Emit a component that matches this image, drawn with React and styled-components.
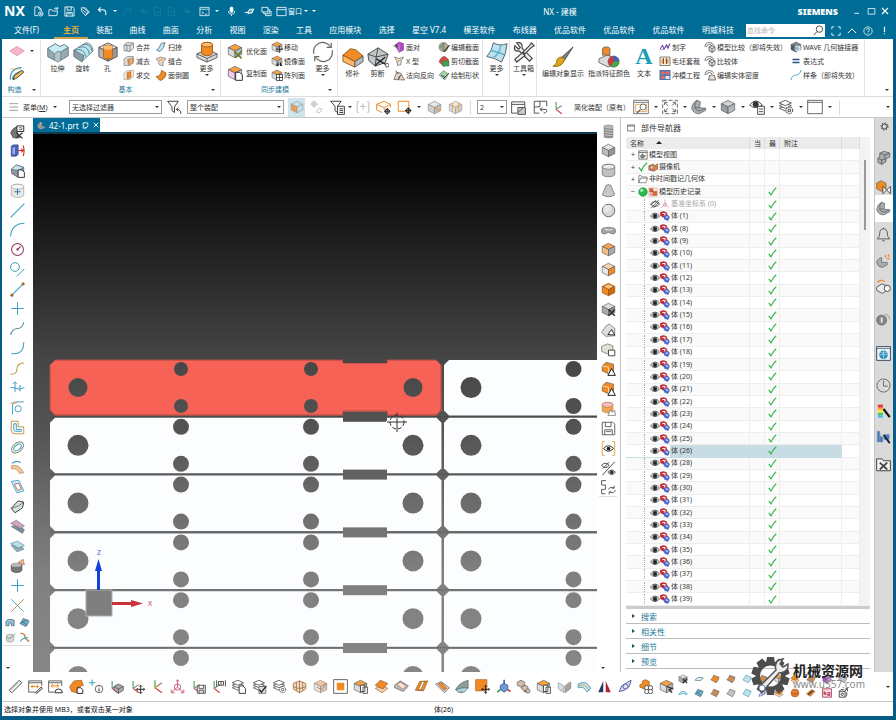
import React from 'react';
import styled, { createGlobalStyle, css } from 'styled-components';

const GlobalStyle = createGlobalStyle`
  * { box-sizing: border-box; }
  html, body, #root { height: 100%; }
  body {
    margin: 0;
    overflow: hidden;
    font-family: "Noto Sans", "Noto Sans CJK SC", sans-serif;
    font-size: 7px;
    color: #333333;
  }
  button, input, select { font: inherit; color: inherit; margin: 0; padding: 0; }
  button { border: 0; background: none; cursor: pointer; }
  svg { display: block; flex: none; }
`;

/* ---------- icon drawings, all on a 24 x 24 grid ---------- */

const OR = '#f08a24';
const GY = '#a9acae';
const LN = '#55585a';
const TL = '#3a9fc0';

const Cube = ({ t = '#d9dbdc', l = '#a9acae', r = '#8b8e90', s = LN }) => (
  <g stroke={s} strokeLinejoin="round">
    <path d="M12 2 22 7 12 12 2 7z" fill={t} />
    <path d="M2 7 12 12V22L2 17z" fill={l} />
    <path d="M22 7 12 12V22L22 17z" fill={r} />
  </g>
);
const OrangeTop = () => <Cube t="#f9a03f" l="#d9dbdc" r="#b9bcbe" />;
const Page = () => <path d="M13 11h6l4 4v8H13z" fill="#fff" stroke="#333" strokeWidth="1.5" />;
const Move = () => <path d="M17 10v13M10.500 16.500h13M15 12l2-2 2 2M15 21l2 2 2-2M12.500 14.500l-2 2 2 2M21.500 14.500l2 2-2 2" stroke="#222" strokeWidth="1.500" fill="none" />;
const Stack = () => (
  <g fill="#fff" stroke={LN} strokeWidth="1.400">
    <path d="M2 14 11 10 20 14 11 18z" />
    <path d="M2 10 11 6 20 10 11 14z" />
    <path d="M2 6 11 2 20 6 11 10z" />
  </g>
);
const Axes = () => (
  <g fill="none" strokeWidth="1.800">
    <path d="M5 3v12" stroke="#4aa564" /><path d="M5 15l9 7" stroke="#d33c3c" /><path d="M5 15 14 9" stroke="#777" />
  </g>
);
const Sheet = ({ c = OR, s = LN }) => <path d="M2 14Q7 9 9 3L22 8Q20 15 15 21z" fill={c} stroke={s} strokeWidth="1.400" />;
const Gear = () => (
  <g stroke={LN} fill="none" strokeWidth="1.600"><circle cx="17" cy="17" r="5" fill="#fff" strokeDasharray="2.500 1" /><circle cx="17" cy="17" r="2" /></g>
);
const Tool = () => <path d="M12 12l10 10M22 12 12 22" stroke="#333" strokeWidth="2.600" />;

const DRAW = {
  none: null,
  newFile: <g stroke="#fff" fill="none" strokeWidth="1.800"><path d="M11 21H4V2h9l5 5v4M13 2v5h5" /><circle cx="17" cy="17" r="5" /><path d="M17 14v6M14 17h6" /></g>,
  open: <g stroke="#fff" fill="none" strokeWidth="1.800"><path d="M2 21V8h6l2 3h11l-2 10zM13 6q4-4 8 0M21 2v5h-5" /></g>,
  save: <g stroke="#fff" fill="none" strokeWidth="1.800"><path d="M2 2h17l3 3v17H2zM7 2v7h9V2M6 22v-8h12v8M8 17h8" /></g>,
  saveGray: <g stroke="#666" fill="none" strokeWidth="1.600"><path d="M2 2h17l3 3v17H2zM7 2v7h9V2M6 22v-8h12v8M8 17h8" /></g>,
  display: <path d="M14 21H4V3h16v9M9 16l5 5 7-8" stroke="#fff" fill="none" strokeWidth="3" />,
  clean: <g stroke="#fff" fill="none" strokeWidth="1.800"><path d="M3 4h9l7 8-7 9-9-10zM8 4l11 11M12 21l9-9M6 8l9 9" /></g>,
  undo: <path d="M8 3 3 8l5 5M3 8h10q8 1 6 12" stroke="#fff" fill="none" strokeWidth="2.200" />,
  redoDim: <path d="M16 3l5 5-5 5M21 8H11q-8 1-6 12" stroke="#1d80a6" fill="none" strokeWidth="1.600" />,
  cutDim: <path d="M3 12h18M12 6v12M6 8l12 8" stroke="#1d80a6" strokeWidth="1.600" />,
  pageDim: <path d="M5 3h9l5 5v13H5zM9 12h6M9 16h6" stroke="#1d80a6" fill="none" strokeWidth="1.600" />,
  windowW: <g stroke="#fff" fill="none" strokeWidth="1.600"><path d="M2 3h20v18H2zM2 7h20M6 12l4 3-4 3M13 18h5" /></g>,
  mic: <g stroke="#fff" fill="none" strokeWidth="1.800"><rect x="9" y="2" width="6" height="12" rx="3" fill="#fff" /><path d="M5 11q0 7 7 7t7-7M12 18v4" /></g>,
  swap: <path d="M2 14h6l5-7h8l-4 8h-6l-3 3M14 11h5" stroke="#fff" fill="none" strokeWidth="2.200" />,
  cascade: <g stroke="#fff" fill="none" strokeWidth="1.800"><path d="M2 3h13v10H2zM6 13v4h12V7h-3M10 17v4h12V11h-4" /></g>,
  frame: <g stroke="#fff" fill="none" strokeWidth="1.800"><path d="M2 3h20v18H2zM2 8h20" /></g>,
  full: <path d="M2 8V2h6M16 2h6v6M22 16v6h-6M8 22H2v-6" stroke="#fff" fill="none" strokeWidth="2" />,
  up: <path d="M2 17 12 7l10 10" stroke="#fff" fill="none" strokeWidth="2.400" />,
  help: <g stroke="#fff" fill="none" strokeWidth="1.800"><circle cx="12" cy="12" r="10" /><path d="M8.500 9q0-3 3.500-3t3.500 3-3.500 4v2M12 17v2" /></g>,
  alert: <path d="M12 2v14M12 19v3" stroke="#fff" strokeWidth="3" />,
  min: <path d="M4 19h14" stroke="#fff" strokeWidth="2.600" />,
  max: <path d="M3 4h18v15H3z" stroke="#fff" strokeWidth="2" fill="none" />,
  close: <path d="M3 3l18 18M21 3 3 21" stroke="#fff" strokeWidth="3.500" />,
  loupe: <g stroke="#333" fill="none" strokeWidth="1.800"><circle cx="14" cy="9" r="7" /><path d="M9 14l-7 8" /></g>,

  plane: <path d="M12 5 23 12 12 19 1 12z" fill="#f7b7c8" stroke="#d98ba0" />,
  sketch: <g fill="none"><path d="M2 22Q1 5 19 4M5 21Q8 10 22 9" stroke={TL} strokeWidth="1.800" /><path d="M2 6h16" stroke="#e5a23c" /><path d="M6 22l2-6L19 8l3 3-11 9z" fill="#f4c25a" stroke="#333" strokeWidth="1.400" /></g>,
  extrude: <g stroke="#6f868e"><path d="M1 8 9 3l5 3 5-2 4 3v9l-11 7L1 17z" fill="#b5c3c8" /><path d="M1 8 9 3l5 3 5-2 4 3-8 5-3-1-4 3z" fill="#c8eef5" /><path d="M1 8l7 6v7L1 17zM15 12l8-5v9l-8 5z" fill="#98a9af" /></g>,
  revolve: <g stroke="#5d7c88"><path d="M2 10 15 2q7 0 8 9L12 21z" fill="#b8e5ef" /><path d="M2 10v7l9 6 2-7z" fill="#8b9ba1" /><path d="M3 10q10-3 12 7M7 7q10-3 12 7M11 4q9-2 11 7" fill="none" /></g>,
  hole: <g><Cube t="#e4e6e7" l="#b4b7b9" r="#989b9d" /><path d="M7 7a5 2.500 0 0 1 10 0v10a5 2.500 0 0 1-10 0z" fill={OR} stroke="#b4601a" /><ellipse cx="12" cy="7" rx="5" ry="2.500" fill="#ffbe72" /></g>,
  unite: <g stroke="#444"><path d="M2 8 9 3l12 1v10l-7 7-12-2z" fill="#dcdfe0" /><path d="M2 8l12 1v12M14 9l7-5M8 8v12" fill="none" /></g>,
  subtract: <g stroke="#555"><path d="M2 8 9 3h12v12l-7 6H2z" fill="#ddd" /><path d="M9 9l10-3v10l-8 4z" fill="#f6b06c" stroke="#b4601a" /><path d="M12 9v8" stroke="#345" /></g>,
  intersect: <g stroke="#888"><path d="M2 8 9 3h12v12l-7 6H2z" fill="#eee" /><path d="M8 7l8-2v12l-8 3z" fill={OR} stroke="#b4601a" /></g>,
  sweep: <path d="M3 18Q9 16 12 5l8-2q-1 12-10 18z" fill="#b8e5ef" stroke="#557" strokeWidth="1.400" />,
  sew: <g><path d="M2 8l9-4 11 3-6 7v8l-8-3q1-8-6-11z" fill="#ead8c6" stroke="#777" strokeWidth="1.400" /><path d="M8 11l8-3" stroke={OR} strokeWidth="2" /></g>,
  blend: <path d="M2 15Q12 15 13 3l9 5q0 12-12 15z" fill={OR} stroke="#8d4b10" strokeWidth="1.400" />,
  moreCyl: <g stroke={LN}><path d="M1 14l11-5 11 5v4l-11 5-11-5z" fill="#d7dadb" /><path d="M1 14l11 5 11-5M12 19v4" fill="none" /><path d="M6 4a6 2.500 0 0 1 12 0v9a6 3 0 0 1-12 0z" fill={OR} stroke="#a85a14" /><ellipse cx="12" cy="4" rx="6" ry="2.500" fill="#ffbe72" stroke="#a85a14" /></g>,
  optFace: <g><OrangeTop /><path d="M11 13l11 10M13 22l9-10" stroke="#6d7a32" strokeWidth="2.600" /></g>,
  copyFace: <g><Cube t="#f9a03f" l="#f4c8f0" r="#c9ccce" /><Page /></g>,
  moveFace: <g><OrangeTop /><Move /></g>,
  mirrorFace: <g><OrangeTop /><path d="M10 22l5-9v9zM23 22l-5-9v9z" fill="#222" /></g>,
  patternFace: <g><OrangeTop /><path d="M11 11h12v12H11zM17 11v12M11 17h12" fill="#fff" stroke="#333" strokeWidth="1.600" /></g>,
  refresh: <g fill="none" stroke="#666" strokeWidth="1.300"><path d="M2 14A10 10 0 0 1 20 6M22 10A10 10 0 0 1 4 18" /><path d="M21 2v5h-5M3 22v-5h5" /></g>,
  patch: <g stroke="#8d5a20"><path d="M1 10 9 3l6 1 8 7-9 6z" fill={OR} /><path d="M1 10l13 7v6L1 17z" fill="#ffb765" /><path d="M14 17l9-6v6l-9 6z" fill="#b9bcbe" stroke={LN} /></g>,
  trim: <g stroke="#444"><path d="M1 9 12 2l11 7-3 9-11 4-7-6z" fill="#c4c7c9" /><path d="M1 9l9 3 2-10M10 12l13-3M10 12l-1 10" fill="none" /><path d="M10 14l12 7M20 12 9 21" stroke="#222" strokeWidth="1.500" /><circle cx="22" cy="21" r="2" fill="#fff" /></g>,
  facePair: <g><path d="M4 8l8-6 9 3v13l-9 5-4-8z" fill="#b04bc0" stroke="#743080" /><path d="M12 7v15" stroke="#ffd7ff" /><path d="M1 10h8M5 7l4 3-4 3" stroke="#333" fill="none" strokeWidth="1.500" /></g>,
  xform: <g stroke="#666" strokeWidth="1.400" fill="#e6e8e9"><path d="M3 4l9 3 9-3-5 8v7l-7 2-1-9z" /><path d="M7 14l9-5" stroke={OR} fill="none" strokeWidth="2" /></g>,
  normal: <g stroke="#555" strokeWidth="1.400"><path d="M2 21l5-14 8 1 8 14z" fill="#e3d8c5" /><path d="M5 3l6 7M17 11l-6 8M11 21l2-7" stroke="#222" fill="none" /></g>,
  editSec: <g><circle cx="11" cy="12" r="9" fill="#bfae98" stroke={LN} /><path d="M3 13l9-9v17" fill="#7faa7c" stroke="#456" /><path d="M12 22 23 8" stroke="#222" strokeWidth="2.200" /></g>,
  cutSec: <g><path d="M2 14q4-12 12-11l7 6v10l-9 4z" fill="#d6493c" stroke="#555" /><path d="M9 12h13v10H9z" fill="#47a04b" stroke="#276" /></g>,
  drawShape: <g><path d="M2 12 11 3l10 7-7 12z" fill="#a6d1a3" stroke="#567" /><path d="M10 20 22 8M6 12l8 5" stroke="#333" strokeWidth="1.700" /></g>,
  surface: <g stroke="#4a5b62"><path d="M1 17Q7 10 8 2q7 4 15 1-1 12-6 20-8-5-16-6z" fill="#bfe1ec" /><path d="M5 10q8 2 15 5M16 4q0 9-8 14" fill="none" stroke="#5fb3cf" strokeWidth="1.600" /></g>,
  toolbox: <g stroke="#444" fill="none" strokeWidth="1.300"><path d="M4 2l4 5-2 2-4-4q-2 7 5 6l11 11 3-3L10 8q1-7-6-6z" fill="#eee" /><path d="M20 2l3 3-3 2-7 7-2-2 7-7zM10 13l-8 7 2 3 9-7z" fill="#eee" /></g>,
  brush: <g><path d="M23 1 11 12l3 3z" fill="#7c8790" stroke="#444" /><path d="M11 12q-6 0-6 6-1 3-4 4 9 2 13-7z" fill="#dfa51b" stroke="#8a6510" /></g>,
  colors: <g stroke="#666"><path d="M1 14l9-4 12 4v4l-11 5-10-5z" fill="#ddd" /><path d="M5 3a4 2 0 0 1 8 0v7H5z" fill={OR} /><circle cx="17" cy="17" r="6" fill="#d33" /><path d="M17 17v-6a6 6 0 0 1 6 6z" fill="#3465c8" stroke="none" /><path d="M17 17h6a6 6 0 0 1-9 5z" fill="#3fae49" stroke="none" /></g>,
  engrave: <g fill="none" strokeWidth="2"><path d="M2 17l5-9 3 9 5-10 3 8 4-10" stroke="#573c9e" /><path d="M5 18 20 8" stroke="#a75ac8" /></g>,
  nest: <g><path d="M2 4h20v17H2z" fill="#f4efe4" stroke="#665" strokeWidth="1.600" /><path d="M5 8h5v9H5zM13 8h6v9h-6z" fill="#e4a04a" /><path d="M9 6v12M15 6v12" stroke="#733" strokeWidth="1.500" /></g>,
  die: <g><path d="M1 2h22v20H1z" fill="#4d77b8" /><path d="M4 5h7v6H4zM13 5h8v6h-8zM4 14h7v6H4z" fill="#e36a5c" /><path d="M13 14h8v6h-8z" fill="#dfe8f3" /></g>,
  compare: <g fill="none" stroke="#555" strokeWidth="1.600"><path d="M2 12Q2 3 11 3q6 0 9 6M5 12q1-5 6-5 3 0 5 3" /><path d="M10 12l6-3 6 3v7l-6 4-6-4zM10 12l6 3 6-3M16 15v8" fill="#ddd" /></g>,
  density: <g fill="none" stroke="#555" strokeWidth="1.600"><path d="M2 12Q2 3 11 3q6 0 9 6M5 12q1-5 6-5 3 0 5 3" /><path d="M11 13h3q2-5 4 0h3l2 9H9z" fill="#ddd" /></g>,
  wave: <g><Cube t="#7b858c" l="#4f5a62" r="#9ec2d1" /><circle cx="15" cy="15" r="5" fill="none" stroke="#fff" strokeWidth="1.800" /></g>,
  equals: <path d="M5 9h14M5 15h14" stroke="#2e4f86" strokeWidth="2.600" />,
  spline: <path d="M2 22Q4 12 12 12T22 2" stroke={TL} fill="none" strokeWidth="1.700" />,

  menu: <path d="M1 4h21M1 12h21M1 20h21" stroke="#777" strokeWidth="1.700" />,
  funnel: <g stroke="#444" fill="none" strokeWidth="1.600"><path d="M1 2h17l-6 9v9l-4-3v-6zM22 22q1-7-7-7M18 12l-3 3 3 3" /></g>,
  faceCube: <g><Cube t="#c9dfe5" l="#f39a4c" r="#c9dfe5" s="#8a9a9f" /></g>,
  link: <g stroke="#bbb" fill="none" strokeWidth="1.600"><path d="M7 1v12M1 7h12" /><rect x="3" y="3" width="8" height="8" rx="4" /><path d="M12 18l4-4q5 0 4 4l-4 4q-5 1-4-4" /></g>,
  funnelList: <g stroke="#444" fill="#fff" strokeWidth="1.600"><path d="M1 2h17l-6 8v10l-4-3v-7z" /><path d="M12 10h11v13H12zM15 14h6M15 17h6M15 20h6" /></g>,
  boxDim: <g stroke="#bbb" fill="none" strokeWidth="1.600"><path d="M5 3H2v18h3M19 3h3v18h-3M12 6v11M7 11h10" /></g>,
  boxSel: <g stroke={OR} fill="none" strokeWidth="1.600"><path d="M1 7 13 2l10 5-10 5zM1 7v9l9 4M23 7v5M13 12v4" /><path d="M18 13v10M13 18h10" stroke="#222" /><circle cx="18" cy="18" r="3.500" stroke="#222" /></g>,
  rectSel: <g fill="none" strokeWidth="1.600"><path d="M2 2h17v16H2z" stroke={OR} /><path d="M18 12v11M13 17h10" stroke="#222" /><circle cx="18" cy="17" r="3.500" stroke="#222" /></g>,
  cubeIn: <g><Cube t="#e6e6e6" l="#d0d0d0" r="#c0c0c0" s="#888" /><path d="M12 12l10 5" stroke={OR} strokeWidth="1.500" /></g>,
  cubeWire: <g><Cube t="#f4e3d3" l="#ddd" r="#d6d0c8" s="#999" /><path d="M7 5v14M17 5v14" stroke={OR} /></g>,
  winList: <g stroke="#555" fill="none" strokeWidth="1.600"><path d="M1 3h21v8M1 3v18h9M1 7h21" /><path d="M11 12h12v11H11zM11 20l9-8" fill="#ccc" /></g>,
  frames: <g stroke="#555" fill="none" strokeWidth="1.600"><path d="M2 2h20v8M2 2v19h8M2 11h9V2M12 15h9q3 5-4 6M15 12l-4 3 4 3" /></g>,
  axes: <Axes />,
  loupeWin: <g stroke="#666" fill="none" strokeWidth="1.300"><path d="M1 2h22v20H1z" fill="#fff" /><path d="M1 5h22" /><path d="M4 8h16v11H4z" stroke="#e5a23c" /><circle cx="15" cy="12" r="4.500" fill="#fff" /><path d="M11 16l-5 5" strokeWidth="2.200" /></g>,
  fit: <g stroke="#555" fill="none" strokeWidth="1.300"><path d="M1 2h22v20H1z" strokeDasharray="6 3" /><path d="M4 5l5 5M20 5l-5 5M4 19l5-5M20 19l-5-5M4 9V5h4M20 9V5h-4M4 15v4h4M20 15v4h-4" /></g>,
  bracket: <g stroke={LN}><path d="M1 14Q2 5 9 2l5 2-1 9 9 1v3l-9 5q-9 1-12-8z" fill={GY} /><path d="M22 14l-9 4q-5 0-7-5M9 2q-4 5-3 11 4-1 7 0" fill="none" /></g>,
  cubeShade: <Cube t="#cfd1d2" l="#9b9e9f" r="#b5b8b9" />,
  eyeList: <g stroke="#333" fill="none" strokeWidth="1.300"><path d="M1 9q9-12 19 0-10 8-19 0z" fill="#fff" /><circle cx="10" cy="8" r="4" fill="#333" /><path d="M13 11h10v12H13zM15 15h6M15 19h6" fill="#fff" /></g>,
  layers: <g><Stack /><Gear /></g>,
  blankWin: <path d="M1 2h22v20H1zM1 5h22" fill="#fff" stroke="#555" strokeWidth="1.300" />,

  partEdit: <g><path d="M1 14q3-8 11-10v10l4 8H5z" fill="#777" stroke="#333" /><path d="M11 3h11v9H11z" fill="#fff" stroke="#333" strokeWidth="1.600" /><path d="M14 6h5v3h-5" stroke="#333" fill="none" /><path d="M10 14l10 9M20 14 9 23" stroke="#333" strokeWidth="2" /></g>,
  moveObj: <g><path d="M2 5l3-2h8v15l-3 3H2z" fill="#4a63c9" stroke="#334" /><path d="M4 7h4v11H4z" fill="#9aabee" /><path d="M12 12h9M18 9l3 3-3 3M21 4q3 8 0 17" stroke="#c33" fill="none" strokeWidth="1.800" /></g>,
  copyBody: <g><path d="M2 10 10 3l12 4v12l-9 4-10-6z" fill="#8d9aa0" stroke="#444" /><path d="M2 10 10 3l12 4-9 5z" fill="#c3e3ee" stroke="#567" /><Page /></g>,
  cylCut: <g stroke="#999"><path d="M2 6a10 4 0 0 1 20 0v13a10 4 0 0 1-20 0z" fill="#e8e8e8" /><ellipse cx="12" cy="6" rx="10" ry="4" fill="#f6f6f6" /><path d="M12 9v10M7 14h10" stroke="#3c78a0" strokeWidth="1.600" /></g>,
  line: <path d="M1 23 23 1" stroke={TL} strokeWidth="1.700" />,
  arc: <path d="M1 23Q2 3 23 2" stroke={TL} strokeWidth="1.700" fill="none" />,
  circle: <g fill="none" stroke="#8c3a66" strokeWidth="1.700"><circle cx="12" cy="12" r="9.500" /><path d="M12 12l5-5" /><circle cx="12" cy="12" r="1" fill="#8c3a66" /></g>,
  tangent: <g fill="none" stroke={TL} strokeWidth="1.600"><circle cx="8" cy="8" r="7" /><path d="M11 23 23 11" /></g>,
  segment: <g><path d="M3 21 21 3" stroke={TL} strokeWidth="1.700" /><circle cx="3" cy="21" r="2.500" fill="#a86c2c" /><circle cx="21" cy="3" r="2.500" fill="#a86c2c" /></g>,
  plus: <path d="M12 2v20M2 12h20" stroke={TL} strokeWidth="1.600" />,
  scurve: <path d="M1 22Q4 12 12 12T22 2" stroke="#4f88a0" strokeWidth="1.700" fill="none" />,
  corner: <path d="M2 20Q22 23 22 2" stroke={TL} strokeWidth="1.700" fill="none" />,
  scurveOr: <path d="M1 21q10 1 10-8T22 3" stroke="#c29a55" strokeWidth="1.700" fill="none" />,
  trimCurve: <g stroke={TL} strokeWidth="1.600" fill="none"><path d="M1 12q7 0 10 2t12-2M8 4v15M16 8v10M5 6l3-3 3 3" /></g>,
  offsetCirc: <g fill="none" stroke={TL} strokeWidth="1.500"><circle cx="13" cy="14" r="5" /><path d="M4 23V8q0-5 5-5h13" /><path d="M1 5h10" stroke={OR} /></g>,
  offsetBox: <g fill="none" strokeWidth="1.600"><path d="M2 2h11v9h9v11H8q-6 0-6-6z" stroke="#c89750" /><path d="M6 6h4v9h8v3H9q-3 0-3-3z" stroke={TL} /></g>,
  ring: <g fill="none" strokeWidth="1.500"><ellipse cx="12" cy="12" rx="11" ry="7" transform="rotate(-40 12 12)" stroke="#7a8a70" /><ellipse cx="12" cy="12" rx="7" ry="4" transform="rotate(-40 12 12)" stroke={TL} /></g>,
  sheetOr: <g><path d="M2 11Q14 7 22 22l-7 1Q12 14 3 16z" fill="#f2c7a2" stroke="#c77a3a" /><path d="M3 7q8-6 14-1" stroke={TL} fill="none" strokeWidth="1.800" /></g>,
  sheetTl: <g stroke={TL} fill="#d8eef5" strokeWidth="1.400"><path d="M2 4l12-2 8 17-11 3z" /><path d="M7 8l7-1 4 9-6 2z" fill="#fff" stroke="#a66" /></g>,
  sheetDk: <g><path d="M2 15 13 3l9 2-2 9-12 8z" fill="#d7e4e6" stroke="#333" strokeWidth="1.500" /><path d="M2 15q12-2 20-10" stroke="#333" fill="none" /></g>,
  sheetPk: <g stroke="#678"><path d="M2 12 12 9l11 8-3 6z" fill="#7d8c93" /><path d="M1 7l9-5 13 9-6 4z" fill="#d6a3bc" /></g>,
  sheetBl: <g stroke="#49808f"><path d="M2 12l9 10 11-4-5-8z" fill="#9ab" /><path d="M1 9l11-4 11 7-10 4z" fill="#b9dfe7" /></g>,
  cylArr: <g><path d="M2 11a9 4 0 0 1 17 0v8a8 4 0 0 1-17 0z" fill="#777" stroke="#333" /><ellipse cx="10" cy="11" rx="8" ry="3" fill="#bbb" /><path d="M13 7l8-5 2 9z" fill="#f0b989" stroke="#a65" /></g>,
  crossX: <g strokeWidth="1.500"><path d="M2 2l20 20" stroke={TL} /><path d="M22 2 2 22" stroke="#c57f45" /></g>,
  arch: <path d="M2 19V10q4-8 18-3v12h-6v-6h-5v6z" fill="#8fc4d6" stroke="#456" strokeWidth="1.400" />,
  sheetB2: <g><Sheet c="#5fb3cf" /><path d="M6 9l12 9M4 14l12-8" stroke="#345" /></g>,
  cylClip: <g stroke="#678"><path d="M3 8a8 3 0 0 1 16 0v10a8 4 0 0 1-16 0z" fill="#dcd7c8" /><path d="M3 11q8 8 19-8" fill="none" stroke={TL} strokeWidth="1.800" /></g>,
  twist: <g><path d="M3 3q12 0 10 10l9 8" stroke="#c98446" strokeWidth="3" fill="none" /><path d="M3 21q3-8 17-9" stroke={TL} strokeWidth="2.400" fill="none" /></g>,

  thread: <g stroke="#777"><path d="M5 3q7-3 14 0v18q-7 3-14 0z" fill="#bbb" /><path d="M5 7l14 2M5 11l14 2M5 15l14 2M5 19l14 2" fill="none" strokeWidth="1.400" /></g>,
  cube: <Cube t="#e2e4e5" l="#b9bcbe" r="#95989a" />,
  cyl: <g stroke={LN}><path d="M2 6a10 4 0 0 1 20 0v12a10 4 0 0 1-20 0z" fill="#bfc2c4" /><ellipse cx="12" cy="6" rx="10" ry="4" fill="#e8eaeb" /></g>,
  cone: <path d="M2 19 8 4q4-3 8 0l6 15q-10 6-20 0z" fill="#c6c9cb" stroke={LN} />,
  sphere: <g><circle cx="12" cy="12" r="10" fill="#d4d6d7" stroke={LN} strokeWidth="1.400" /><circle cx="10" cy="9" r="6" fill="#e4e6e7" /></g>,
  tube: <g stroke={LN}><path d="M1 11q0-4 11-4t11 4v4q-2 4-6 2-5-4-10 0-4 2-6-2z" fill="#a3a6a8" /><path d="M6 10q6 3 12 0" fill="none" stroke="#eee" strokeWidth="1.500" /></g>,
  edgeOr: <g><Cube t="#f5a14f" l="#f8bd82" r="#a9acae" /></g>,
  chamOr: <g><Cube t="#f4d3b0" l="#e4e6e7" r={OR} /></g>,
  shell: <g><Cube t="#e07c18" l="#f08a24" r="#c96a10" s="#8d4b10" /><path d="M5 7l7 4 7-4-7-3z" fill="#fac489" /></g>,
  cubeTool: <g><Cube /><Tool /></g>,
  wedge: <g stroke={LN}><path d="M1 17Q6 6 13 3l9 7v12L8 23z" fill="#dcdedf" /><path d="M11 20l6-8 5 9z" fill="#fff" stroke="#222" strokeWidth="1.500" /></g>,
  cubePair: <g><path d="M1 7l9-4 9 3v8l-9 5-9-4z" fill="#e1e0d2" stroke={LN} /><path d="M12 13h10v9H12z" fill="#fff" stroke="#444" strokeWidth="1.500" /></g>,
  orTri: <g><path d="M2 8 8 2l12 3v12l-9 3-9-4z" fill={OR} stroke="#555" /><path d="M2 8l10 2v10" fill="none" stroke="#fff" /><path d="M11 23l6-11 6 11z" fill="#fff" stroke="#222" strokeWidth="1.600" /></g>,
  cylPk: <g stroke="#b0783a"><path d="M2 5a9 4 0 0 1 17 0v11a9 4 0 0 1-17 0z" fill="#f2a65a" /><ellipse cx="10.500" cy="6" rx="8.500" ry="4" fill="#f6bccb" /><path d="M11 23l4-9 3 4 4-3 1 8z" fill="#fff" stroke="#555" /></g>,
  eyeBox: <g fill="none" strokeWidth="1.600"><path d="M6 1H2v22h4M18 1h4v22h-4" stroke="#e4a45a" /><path d="M4 12q8-9 16 0-8 9-16 0z" stroke="#333" /><circle cx="12" cy="12" r="3" fill="#222" /></g>,
  eyeSwap: <g stroke="#444" fill="none" strokeWidth="1.500"><path d="M1 7q6-7 12 0-6 7-12 0zM22 1 2 23M3 12 13 2M11 18q6-7 12 0-6 7-12 0z" /><circle cx="17" cy="18" r="2.500" fill="#222" /></g>,
  sync: <g stroke="#555" fill="none" strokeWidth="1.500"><path d="M8 1H1v7h6v7H1v7h6M12 15q2-5 9-2M23 16q-2 7-9 3M21 9v4h-4M13 23v-4h4" /></g>,

  ruler: <g><path d="M2 18 18 2l4 4L6 22z" fill="#fff" stroke="#444" strokeWidth="1.600" /><path d="M5 18 18 5" stroke="#999" /></g>,
  dimA: <g fill="none" strokeWidth="1.600"><path d="M22 11V3H1v18h11" stroke="#666" /><path d="M1 6h21" stroke="#666" /><path d="M5 12h12M8 9l-3 3 3 3M14 9l3 3-3 3" stroke={OR} /><path d="M12 22l9-9 2 2-9 8z" fill="#fff" stroke="#333" /></g>,
  dimB: <g fill="none" strokeWidth="1.600"><path d="M22 11V3H1v18h9M1 6h21" stroke="#666" /><path d="M5 11h12M8 8l-3 3 3 3M14 8l3 3-3 3" stroke={OR} /><path d="M11 22a6 6 0 0 1 12 0z" fill="#fff" stroke="#333" /></g>,
  orShape: <g><path d="M1 12 8 3l12-1 3 8-8 3-2 9-9-2z" fill={OR} stroke="#935312" /><path d="M13 23v-9h6l3 3v6z" fill="#fff" stroke="#222" strokeWidth="1.500" /></g>,
  info: <g fill="none"><path d="M5 1v10M0 6h10" stroke={TL} strokeWidth="1.600" /><circle cx="16" cy="16" r="6" stroke="#555" strokeWidth="1.400" /><path d="M16 15v5M16 12v1" stroke="#333" strokeWidth="1.600" /></g>,
  axesCube: <g><Axes /><path d="M8 12l7-4 8 4v6l-8 5-7-5z" fill="#aaa" stroke="#444" /><path d="M8 12l7 4 8-4M15 16v7" fill="none" stroke="#444" /></g>,
  axesMove: <g><Axes /><Move /></g>,
  axesSimple: <g fill="none" strokeWidth="2"><path d="M8 2v12" stroke="#4aa564" /><path d="M8 14l11 8" stroke="#d33c3c" /><path d="M8 14 19 6" stroke="#a0824a" /><circle cx="8" cy="14" r="2" fill="#e0b030" /></g>,
  axesTri: <g fill="none" stroke="#c65c74" strokeWidth="1.500"><path d="M12 2v11L3 21M12 13l9 8" /><circle cx="12" cy="13" r="5" /><path d="M10 4l2-3 2 3M2 17v5h5M22 17v5h-5" /></g>,
  axesSave: <g><Axes /><path d="M10 10h13v13H10zM13 10v5h7v-5M13 23v-5h7v5" fill="#ddd" stroke="#555" strokeWidth="1.400" /></g>,
  axesTag: <g><Axes /><path d="M9 2v10M23 2v10M12 4h8v6h-8zM16 4v6" fill="none" stroke="#555" strokeWidth="1.600" /></g>,
  stackPage: <g><Stack /><Page /></g>,
  stackCheck: <g><Stack /><path d="M11 12h11v11H11z" fill="#ddd" stroke="#444" /><path d="M12 17l3 4 8-10" fill="none" stroke="#222" strokeWidth="2" /></g>,
  stackGear: <g><Stack /><Gear /></g>,
  globeOr: <g stroke="#a57445" fill="#f1dcc5" strokeWidth="1.400"><path d="M2 7l10-4 10 4v9l-10 6-10-6z" /><path d="M2 12q10 6 20 0M12 3v19M7 5v14M17 5v14" fill="none" /></g>,
  boxOr: <g><Cube t="#f3c7a0" l="#e5e7e8" r="#d1cdbf" s="#888" /><path d="M6 13l8 4 7-9" fill="none" stroke="#c77a3a" strokeWidth="1.500" /></g>,
  square: <g><path d="M1 1h22v22H1z" fill="#fff" stroke="#555" strokeWidth="1.400" /><path d="M6 6h12v12H6z" fill={OR} /></g>,
  orPage: <g><OrangeTop /><path d="M12 10h7v10h-7zM16 13h7v10h-7z" fill="#fff" stroke="#444" strokeWidth="1.400" /></g>,
  orStack: <g stroke="#83501c"><path d="M2 15l10-5 10 5-9 7z" fill="#f2d2b4" /><path d="M2 10l8-8 12 5-8 9z" fill={OR} /></g>,
  slabA: <g stroke="#555"><path d="M1 10l9-7 13 8-8 9-14-6z" fill="#bbb" /><path d="M5 9l5-4 9 6-5 5z" fill="#fbe8d8" stroke="#a65" /></g>,
  slabB: <g stroke="#83501c"><path d="M2 18 9 4l13-1-7 16z" fill={OR} /><path d="M7 17l6-13 4 0-6 13z" fill="#fff" /></g>,
  slabC: <g stroke="#555"><path d="M1 8l9-4 13 10-8 8z" fill="#cfd2d3" /><path d="M5 8l6-2 8 9-5 3z" fill={OR} stroke="#a65" /></g>,
  wing: <g stroke="#555"><path d="M1 17Q6 6 21 2v12l-11 8z" fill="#8fa09b" /><path d="M1 17q10-4 20-3l-6 7H5z" fill="#a5d8e2" /></g>,
  orMove: <g><path d="M1 1h18v18H1z" fill={OR} stroke="#a85a14" /><Move /></g>,
  cubeAxis: <g><path d="M7 10l6-3 6 3v7l-6 4-6-4z" fill="#6d9bd8" stroke="#336" /><path d="M13 1v7" stroke="#2a52b8" strokeWidth="2.400" /><path d="M7 17l-5 4" stroke="#2f9b44" strokeWidth="2.600" /><path d="M19 17l4 3" stroke="#c33" strokeWidth="2.600" /></g>,
  chain: <g stroke="#777" fill="#d8b9a3" strokeWidth="1.400"><path d="M2 5l6-3 6 3v5l-6 3-6-3zM9 12l5-2 5 2v4l-5 3-5-3z" /><circle cx="19" cy="19" r="3.500" /><path d="M12 19l5 2" fill="none" strokeWidth="2" /></g>,
  mirrorSh: <g><path d="M2 6l9 5v11l-9-7z" fill="#cfe3ea" stroke="#888" /><path d="M13 11l9-6v10l-9 7z" fill="#a3a6a8" stroke="#777" /><path d="M5 20 20 4" stroke="#d79a5c" /></g>,
  archSh: <g fill="none" strokeWidth="1.500"><path d="M2 8Q15 1 22 15l-6 6Q12 11 2 14z" fill="#cfe6ec" stroke={TL} /><path d="M2 11q12-5 17 7" stroke="#d79a5c" /></g>,
  mirror: <g><path d="M10 3v18H2z" fill="#2c3566" /><path d="M14 3v18h8z" fill="#a8262c" /></g>,
  linkBl: <g fill="#dce0f5" stroke="#5b62a6" strokeWidth="1.600"><path d="M2 20l4-9 8-5 7-4-3 10-8 6z" /><circle cx="12" cy="12" r="4" /></g>,
  orDots: <g><path d="M3 9l4-2V3l5-2 6 3v7l-8 5-7-3z" fill={OR} stroke="#935312" /><g fill="#fff" stroke="#444" strokeWidth="1.400"><circle cx="14" cy="14" r="3.500" /><circle cx="20" cy="14" r="3.500" /><circle cx="14" cy="20" r="3.500" /><circle cx="20" cy="20" r="3.500" /></g></g>,
  orCubeArr: <g><OrangeTop /><path d="M12 12l9 3-5 2 5 5" fill="none" stroke="#333" strokeWidth="2" /></g>,
  kg: <g><path d="M1 2h22v20H1z" fill="#f8dbe4" stroke="#a5304e" strokeWidth="2" /><text x="12" y="17" fontSize="14" fontWeight="700" textAnchor="middle" fill="#b3224a">kg</text></g>,
  boxArrow: <g fill="none" stroke="#333" strokeWidth="2"><path d="M3 8h14v14H3zM3 8l4-4h8M17 22l4-4v-8M23 1l-8 8M17 2h6v6" /><circle cx="10" cy="15" r="3" /></g>,
  shOr: <Sheet />,
  shTan: <Sheet c="#c98b52" />,
  shGray: <Sheet c="#c2c5c7" />,
  shBlue: <Sheet c="#bfe3ef" s="#3a87a0" />,
  shPurple: <g><Cube t="#c58be0" l="#9f58c6" r="#b79ae0" s="#635" /></g>,
  flat: <path d="M2 15 9 8l13 1-6 7z" fill="#d8eef0" stroke="#4e7f86" strokeWidth="1.700" />,
  curveBl: <path d="M2 16q4-10 12-8 7 2 8 8-10-6-20 0z" fill="#d8eef5" stroke={TL} strokeWidth="1.700" />,
  ballOr: <g><circle cx="12" cy="12" r="9.500" fill="#e8792a" stroke="#7d4310" /><path d="M3 13q9 5 18-1" stroke="#7d4310" fill="none" /></g>,
  barOr: <g stroke="#6b3f12"><path d="M1 14 13 4l9 4-11 12z" fill={OR} /><path d="M5 16 17 6" strokeWidth="3" stroke="#333" /></g>,

  gear: <g fill="none" stroke="#333"><circle cx="12" cy="12" r="7" strokeWidth="2.600" /><circle cx="12" cy="12" r="9.500" strokeWidth="2.600" strokeDasharray="3 4.460" /></g>,
  assembly: <g stroke="#444"><path d="M6 5l7-3 9 3v6l-6 3v5l-7 4-6-3v-7l3-2z" fill="#aaadaf" /><path d="M6 5l8 3 8-3M14 8v6M3 13l6 3 7-2M9 16v7" fill="none" /></g>,
  constraint: <g><path d="M1 5l7-4 8 4v9l-8 4-7-4z" fill={OR} stroke="#555" /><path d="M11 10v12l12-12v12z" fill="#fff" stroke="#444" strokeWidth="1.500" /></g>,
  bell: <g fill="none" stroke="#555" strokeWidth="1.500"><path d="M2 19q4-3 4-9 0-7 6-7t6 7q0 6 4 9zM10 22h4M12 1v2" /></g>,
  bracketDots: <g><path d="M1 14q3-6 8-7v8h9v4l-8 4q-8-1-9-9z" fill={GY} stroke={LN} /><path d="M15 3v4M20 2v4M17 9h5" stroke={OR} strokeWidth="2.200" /></g>,
  reuse: <g><path d="M1 13l8-5 9 3v7l-8 5-9-5z" fill="#eee" stroke="#555" strokeWidth="1.500" /><circle cx="18" cy="15" r="5" fill="#fff" stroke="#444" strokeWidth="1.500" /><path d="M2 5l6-3 6 2" fill="none" stroke={OR} strokeWidth="2" /></g>,
  infoG: <g><circle cx="9" cy="13" r="8" fill="#888" stroke="#555" /><path d="M9 9v8" stroke="#fff" strokeWidth="2.400" /><path d="M14 3q7 2 8 9" stroke="#aaa" fill="none" strokeWidth="2" /></g>,
  web: <g><path d="M1 1h22v22H1z" fill="#e8f2f7" stroke="#345" strokeWidth="1.500" /><path d="M1 4h22" stroke="#345" /><circle cx="12" cy="14" r="7" fill="#2f8fb8" /><path d="M5 14h14M12 7v14M7 10q5 3 10 0" stroke="#cde9f3" fill="none" /></g>,
  clock: <g fill="none" stroke="#666" strokeWidth="1.500"><circle cx="12" cy="12" r="10.500" /><path d="M12 4v9h7" /></g>,
  roles: <g><path d="M3 1h8v5H3z" fill="#e33" /><path d="M3 6h8v4H3z" fill="#fa3" /><path d="M3 10h8v4H3z" fill="#fe4" /><path d="M3 14h8v4H3z" fill="#4c5" /><path d="M3 18h8v4H3z" fill="#4be" /><path d="M12 8l10 13" stroke="#111" strokeWidth="3.500" /></g>,
  process: <g><path d="M2 2h4v17H2zM6 9l5 3v7H6zM13 7h8v8h-8z" fill="#4f79b5" stroke="#6e8fc0" /><path d="M12 8l10 13" stroke="#17233a" strokeWidth="3" /></g>,
  toolsBox: <g><path d="M1 3h9l2 3h11v16H1z" fill="#f4f4f4" stroke="#444" strokeWidth="1.600" /><path d="M6 9l12 11M18 9 6 20" stroke="#444" strokeWidth="2.800" /></g>,

  check: <path d="M2 13l6 8Q13 9 22 2" fill="none" stroke="#35b54a" strokeWidth="3.200" />,
  eye: <g fill="none" stroke="#444" strokeWidth="2"><path d="M1 12q11-14 22 0-11 12-22 0z" fill="#fff" /><circle cx="12" cy="12" r="5" fill="#222" /></g>,
  eyeOff: <g fill="none" stroke="#444" strokeWidth="2"><path d="M1 12q11-12 22 0-11 12-22 0zM3 22 21 2M9 21 22 7M2 15 14 3" /></g>,
  body: <g><path d="M1 3l8-2 7 3v6l-8 5-7-4z" fill="#d22c36" stroke="#801" /><path d="M6 6h6v6" stroke="#fff" fill="none" strokeWidth="2.400" /><path d="M9 13l9-4 5 6-4 8-8-3z" fill="#4d6be0" stroke="#237" /><path d="M14 13l5 3" stroke="#cfe0ff" strokeWidth="3" /></g>,
  viewBox: <g stroke="#555" fill="#fff" strokeWidth="1.800"><path d="M2 2h20v20H2zM2 6h20" /><path d="M6 14l6-5v5h6l-5 5H8z" fill="#999" stroke="#444" /></g>,
  camera: <g><path d="M2 9 13 5l4 4 6-5v13l-9 5-12-3z" fill="#d3814a" stroke="#744" strokeWidth="1.400" /><circle cx="9" cy="13" r="4" fill="#e9cdb9" stroke="#555" /></g>,
  folder: <g fill="#fff" stroke="#555" strokeWidth="1.600"><path d="M2 21V4h6l2 3h11v3M2 21 6 10h17l-4 11z" /></g>,
  ball: <g><circle cx="12" cy="12" r="10.500" fill="#2fb84a" stroke="#1d7d31" /><circle cx="9" cy="8" r="4" fill="#a9efb2" /></g>,
  history: <g><path d="M2 2h20v20H2z" fill="#f7e2d3" stroke="#c89" /><path d="M4 4h8v8H4zM12 11h9v9h-9z" fill="#e0682c" stroke="#833" /><path d="M7 14v5h4" fill="none" stroke="#c33" strokeWidth="1.600" /></g>,
  csys: <g fill="none" stroke="#d98a9e" strokeWidth="1.700"><path d="M12 1v12l-9 8M12 13l9 8" /><circle cx="12" cy="14" r="4" /></g>,
  win: <g fill="none" stroke="#444" strokeWidth="2"><path d="M2 3h20v18H2zM2 6h20" /></g>,
};

const Glyph = ({ name, size = 16 }) => (
  <svg width={size} height={size} viewBox="0 0 24 24" aria-hidden="true">{DRAW[name]}</svg>
);

const Caret = styled.span`
  flex: none;
  width: ${p => p.$w || 8}px;
  display: flex;
  justify-content: center;
  &::before {
    content: "";
    border: 2px solid transparent;
    border-top-color: ${p => p.$light ? '#ffffff' : '#333333'};
    border-bottom-width: 0;
  }
`;

const IconButton = styled.button`
  flex: none;
  display: flex;
  align-items: center;
  justify-content: center;
  width: ${p => p.$w || 16}px;
  height: ${p => p.$h || 16}px;
  ${p => p.$on && css`
    background: #cfe5ec;
    margin-left: 4px;
  `}
`;

const Tool1 = ({ name, w, h, size, on }) => (
  <IconButton type="button" aria-label={name} $w={w} $h={h} $on={on}>
    <Glyph name={name} size={size} />
  </IconButton>
);

/* ---------- window frame ---------- */

const Frame = styled.div`
  height: 100vh;
  display: grid;
  grid-template-rows: 39px 58px 21px minmax(0, 1fr) 30px 14px;
  padding: 0 3px 4px 2px;
  background: #075c86;
`;

const Header = styled.header`
  margin: 0 -3px 0 -2px;
  background: #006d97;
  color: #ffffff;
  display: grid;
  grid-template-rows: 22px 17px;
`;

const TitleBar = styled.div`
  display: grid;
  grid-template-columns: 1fr auto 1fr;
  align-items: center;
`;

const QuickBar = styled.div`
  display: flex;
  align-items: center;
  padding-left: 4px;
`;

const Logo = styled.strong`
  width: 26px;
  font-size: 14px;
  line-height: 22px;
`;

const WindowTitle = styled.div`
  font-size: 8px;
  padding-left: 224px;
`;

const WindowControls = styled.div`
  display: flex;
  align-items: center;
  justify-content: flex-end;
  padding-right: 4px;
`;

const Brand = styled.strong`
  font-size: 9px;
  font-weight: 900;
  margin-right: 11px;
`;

const MenuBar = styled.nav`
  display: flex;
  align-items: center;
  padding: 0 4px 0 14px;
`;

const MenuTabs = styled.div`
  flex: 1;
  display: flex;
  justify-content: space-between;
  margin: 0 12px 0 24px;
`;

const MenuTab = styled.button`
  font-size: 8px;
  line-height: 15px;
  height: 17px;
  white-space: nowrap;
  border-bottom: 2px solid transparent;
  ${p => p.$active && css`
    color: #f0b040;
    margin: 0 -9px;
    padding: 0 9px;
    border-color: #c9a14c;
    font-weight: 700;
  `}
`;

const SearchBox = styled.label`
  display: flex;
  align-items: center;
  width: 79px;
  height: 13px;
  margin-right: 3px;
  padding: 0 1px;
  background: #ffffff;
`;

const SearchInput = styled.input`
  flex: 1;
  min-width: 0;
  border: 0;
  outline: 0;
  background: none;
  color: #333333;
  &::placeholder { color: #b5b5b5; }
`;

/* ---------- ribbon ---------- */

const Ribbon = styled.div`
  display: flex;
  background: #ffffff;
  padding-top: 1px;
  border-bottom: 1px solid #dcdcdc;
`;

const Group = styled.section`
  display: grid;
  grid-template-rows: 43px 13px;
  width: ${p => p.$w}px;
  padding-left: ${p => p.$pad || 0}px;
  border-right: ${p => p.$last ? 0 : '1px solid #e2e2e2'};
`;

const GroupBody = styled.div`
  display: flex;
  align-items: flex-start;
`;

const GroupLabel = styled.div`
  display: flex;
  align-items: center;
  color: #1c7898;
  line-height: 13px;
  span:first-child { flex: 1; text-align: center; }
`;

const BigTool = styled.button`
  flex: none;
  display: flex;
  flex-direction: column;
  align-items: center;
  width: ${p => p.$w || 25}px;
  padding-top: ${p => p.$low ? 6 : 1}px;
  line-height: 11px;
  white-space: nowrap;
`;

const SmallColumn = styled.div`
  flex: none;
  width: ${p => p.$w}px;
`;

const SmallTool = styled.button`
  display: flex;
  align-items: center;
  gap: ${p => p.$tall ? 3 : 1}px;
  height: ${p => p.$tall ? 22 : 14}px;
  padding-left: ${p => p.$inset || 0}px;
  white-space: nowrap;
`;

const LetterA = styled.span`
  font-family: "Liberation Serif", serif;
  font-size: 24px;
  line-height: 20px;
  padding-bottom: 2px;
  font-weight: 700;
  color: #1c9cb8;
`;

const Big = ({ icon, label, w, low, more }) => (
  <BigTool type="button" $w={w} $low={low}>
    {icon === 'letter' ? <LetterA>A</LetterA> : <Glyph name={icon} size={22} />}
    <span>{label}</span>
    {more && <Caret />}
  </BigTool>
);

const Smalls = ({ w, tall, items }) => (
  <SmallColumn $w={w}>
    {items.map(([icon, label]) => (
      <SmallTool type="button" key={label} $tall={tall}>
        <Glyph name={icon} size={tall ? 16 : 12} />
        <span>{label}</span>
      </SmallTool>
    ))}
  </SmallColumn>
);

/* ---------- selection bar ---------- */

const SelectionBar = styled.div`
  display: flex;
  align-items: center;
  background: #ffffff;
  border-bottom: 1px solid #c8c8c8;
  padding-left: 7px;
`;

const MenuButton = styled.button`
  display: flex;
  align-items: center;
  gap: 4px;
  width: 60px;
`;

const Combo = styled.label`
  display: grid;
  align-items: center;
  width: ${p => p.$w}px;
  height: 14px;
  border: 1px solid #9a9a9a;
  background: #ffffff;
  > * { grid-area: 1 / 1; }
  > span { justify-self: end; pointer-events: none; }
`;

const ComboSelect = styled.select`
  appearance: none;
  border: 0;
  outline: 0;
  width: 100%;
  height: 12px;
  padding-left: 2px;
  background: none;
`;

const Divider = styled.span`
  flex: none;
  width: 1px;
  height: 15px;
  margin: 0 6px 0 5px;
  background: #dddddd;
`;

const Spacer = styled.span`
  flex: 1;
`;

const BarText = styled.span`
  width: 61px;
  padding-left: 4px;
  white-space: nowrap;
`;

const Choice = ({ w, label, options }) => (
  <Combo $w={w}>
    <ComboSelect aria-label={label}>
      {options.map(o => <option key={o}>{o}</option>)}
    </ComboSelect>
    <Caret $w={9} />
  </Combo>
);

/* ---------- work area ---------- */

const WorkArea = styled.main`
  display: grid;
  grid-template-columns: 31px minmax(0, 1fr) 23px 254px 19px;
  min-height: 0;
  background: #ffffff;
`;

const SideBar = styled.div`
  display: flex;
  flex-direction: column;
  align-items: center;
  padding: 5px 3px 0 2px;
  min-height: 0;
`;

const SideTools = styled.div`
  display: flex;
  flex-direction: column;
  justify-content: space-between;
  flex: 1;
  min-height: 0;
`;

const PairGrid = styled.div`
  display: grid;
  grid-template-columns: 14px 14px;
  grid-auto-rows: 15px;
  padding-top: 2px;
  border-bottom: 1px solid #dddddd;
`;

const SideEnd = styled.div`
  width: 100%;
  height: ${p => p.$h}px;
  display: flex;
  align-items: flex-end;
  justify-content: flex-start;
  padding-bottom: 3px;
  border-top: ${p => p.$line ? '1px solid #dddddd' : 0};
`;

const Stage = styled.div`
  display: grid;
  grid-template-rows: 14px minmax(0, 1fr);
  min-width: 0;
`;

const FileTab = styled.div`
  justify-self: start;
  display: flex;
  align-items: center;
  gap: 3px;
  width: 67px;
  height: 14px;
  padding-left: 4px;
  background: #006d97;
  color: #ffffff;
  font-size: 8px;
`;

const ViewFrame = styled.div`
  min-height: 0;
  border-top: 2px solid #0c3a50;
  background: #000000;
  overflow: hidden;
`;

const Scene = styled.svg`
  width: 100%;
  height: 100%;
`;

/* plate rows repeat at this distance in the assembly */
const PITCH = 57.8;

const Plate = ({ x, w, y, h, fill }) => (
  <path
    d={`M${x + 5} ${y}H${x + w - 5}L${x + w} ${y + 5}V${y + h - 5}L${x + w - 5} ${y + h}H${x + 5}L${x} ${y + h - 5}V${y + 5}z`}
    fill={fill}
  />
);

const PlateScene = () => (
  <Scene>
    <defs>
      <linearGradient id="depth" gradientUnits="userSpaceOnUse" x1="0" y1="0" x2="0" y2="538">
        <stop offset="0" stopColor="#000000" />
        <stop offset="0.070" stopColor="#060606" />
        <stop offset="0.420" stopColor="#464646" />
        <stop offset="0.560" stopColor="#555555" />
        <stop offset="0.700" stopColor="#6e6e6e" />
        <stop offset="0.820" stopColor="#808080" />
        <stop offset="1" stopColor="#868686" />
      </linearGradient>
    </defs>
    <rect width="100%" height="100%" fill="url(#depth)" />
    {[0, 1, 2, 3, 4, 5].map(i => {
      const top = 226 + i * PITCH;
      return (
        <g key={i}>
          <Plate x={17} w={391.500} y={top} h={55.500} fill={i === 0 ? '#f76257' : '#fbfdff'} />
          <Plate x={411} w={200} y={top} h={55.500} fill="#fbfdff" />
          {i === 0 && (
            <path d="M22 226H310V229H354V226H403L408 231V276L403 281H354V277H310V281H22L17 276V231z" fill="none" stroke="#a84a42" strokeWidth="1" />
          )}
          <g fill="url(#depth)">
            <rect x="310" y={top - (i === 0 ? 3 : 6)} width="44" height={i === 0 ? 6 : 10} />
            {[45, 380, 438].map(cx => <circle key={cx} cx={cx} cy={top + 27.500} r={i === 0 && cx < 400 ? 9.500 : 10.500} />)}
            {[148, 278, 540.500].map(cx => (
              <g key={cx}>
                <circle cx={cx} cy={top + 9} r={i === 0 && cx < 400 ? 7 : 8} />
                <circle cx={cx} cy={top + 46} r={i === 0 && cx < 400 ? 7 : 8} />
              </g>
            ))}
          </g>
          <path d={`M17 ${top + 56.500}H564`} stroke="#3d4348" strokeWidth="0.800" opacity="0.500" />
        </g>
      );
    })}
    <g stroke="#ffffff" strokeWidth="2"><path d="M364 283V299M353 288H375" /></g>
    <g stroke="#333333" fill="none">
      <circle cx="364" cy="288" r="7" strokeDasharray="4 2" />
      <path d="M364 279V298M354 288H374" />
      <path d="M364 278v3" stroke="#c33333" />
    </g>
    <rect x="53" y="456" width="26" height="26" fill="#7e7e7e" stroke="#b0b0b0" />
    <path d="M65.500 456V434" stroke="#1540d8" strokeWidth="3" />
    <path d="M62 437L65.500 425L69 437z" fill="#1540d8" />
    <path d="M79 469.500H98" stroke="#c8323a" strokeWidth="3" />
    <path d="M98 466L110 469.500L98 473z" fill="#c8323a" />
    <g fontSize="7" textAnchor="middle">
      <text x="66" y="421" fill="#4a62d0">Z</text>
      <text x="117" y="472" fill="#b8405c">X</text>
    </g>
  </Scene>
);

/* ---------- part navigator ---------- */

const Navigator = styled.aside`
  display: flex;
  flex-direction: column;
  min-height: 0;
  padding: 0 4px 3px 5px;
  border-left: 1px solid #c4c4c4;
`;

const NavTitle = styled.h2`
  flex: none;
  display: flex;
  align-items: center;
  gap: 6px;
  margin: 0;
  height: 19px;
  padding-left: 1px;
  font-size: 8px;
  font-weight: 400;
`;

const TreeArea = styled.div`
  flex: 1;
  min-height: 0;
  display: grid;
  grid-template-columns: minmax(0, 1fr) 10px;
  border-bottom: 3px solid #cccccc;
`;

const TreeTable = styled.table`
  width: 100%;
  height: 100%;
  table-layout: fixed;
  border-collapse: separate;
  border-spacing: 0;
  th {
    height: 12px;
    padding: 0 0 0 4px;
    background: #ececec;
    border-right: 1px solid #dcdcdc;
    text-align: left;
    font-weight: 400;
    line-height: 11px;
    white-space: nowrap;
  }
  td {
    padding: 0;
    line-height: 10px;
    border-right: 1px solid #eeeeee;
    border-bottom: 1px solid #eeeeee;
    vertical-align: middle;
  }
`;

const TreeRow = styled.tr`
  background: ${p => p.$odd ? '#fafafa' : '#ffffff'};
  ${p => p.$dim && css`color: #a5a5a5;`}
  ${p => p.$picked && css`
    td { background: #c8dde3; border-color: #c8dde3; }
    td:first-child { background: linear-gradient(90deg, #ffffff 44px, #c8dde3 44px); }
    td:last-child { background: #ffffff; border-color: #eeeeee; }
  `}
`;

const NameCell = styled.div`
  display: flex;
  align-items: center;
  height: 10px;
  margin-left: ${p => p.$leaf ? 18 : 5}px;
  border-left: ${p => p.$leaf ? '1px dotted #aaaaaa' : 0};
  padding-left: ${p => p.$leaf ? 5 : 0}px;
  white-space: nowrap;
  span { padding-left: 1px; }
`;

const Expander = styled.button`
  width: 7px;
  line-height: 9px;
  text-align: left;
`;

const SortMark = styled.i`
  display: inline-block;
  margin: 0 0 2px 12px;
  border: 3px solid transparent;
  border-bottom-color: #222222;
  border-top-width: 0;
`;

const CheckMark = styled.div`
  display: flex;
  justify-content: center;
`;

const ScrollTrack = styled.div`
  background: #f3f3f3;
  display: flex;
  flex-direction: column;
  align-items: center;
  padding-top: 23px;
  &::before {
    content: "";
    width: 2px;
    height: 70px;
    background: #999999;
  }
`;

const Section = styled.button`
  flex: none;
  display: flex;
  align-items: center;
  gap: 6px;
  height: 15px;
  padding-left: 6px;
  font-size: 8px;
  color: #1c7898;
  text-align: left;
  border-bottom: 1px solid #bdbdbd;
  &::before {
    content: "";
    border: 2px solid transparent;
    border-left: 3px solid #1d5268;
    border-right-width: 0;
  }
`;

const ResourceBar = styled.div`
  background: #dadada;
  border-left: 1px solid #c4c4c4;
`;

const ResourceTab = styled.button`
  display: flex;
  align-items: center;
  justify-content: flex-start;
  width: 100%;
  padding-left: ${p => p.$small ? 5 : 1}px;
  height: ${p => p.$h}px;
  background: ${p => p.$active ? '#ffffff' : 'none'};
`;

/* ---------- bottom ---------- */

const BottomBar = styled.footer`
  position: relative;
  display: flex;
  align-items: center;
  background: #ffffff;
  border-bottom: 1px solid #c8c8c8;
  padding: 0 2px 0 5px;
`;

const BottomTools = styled.div`
  flex: 1;
  display: flex;
  justify-content: space-between;
`;

const MiniGrid = styled.div`
  display: grid;
  grid-template-columns: repeat(11, 12px);
  column-gap: 4px;
  grid-auto-rows: 14px;
  margin: 0 36px 0 3px;
`;

const StatusBar = styled.div`
  display: grid;
  grid-template-columns: 430px 1fr;
  align-items: center;
  padding-left: 2px;
  background: #ffffff;
  color: #111111;
`;

const Watermark = styled.div`
  position: absolute;
  right: 28px;
  bottom: 5px;
  display: flex;
  align-items: center;
  pointer-events: none;
`;

const WatermarkText = styled.div`
  font-size: 14px;
  line-height: 16px;
  font-weight: 700;
  color: #222222;
  margin-left: 2px;
  small {
    display: block;
    font-size: 10px;
    line-height: 10px;
    font-weight: 400;
    color: #8a8a8a;
  }
`;

const TEETH = [0, 36, 72, 108, 144, 180, 216, 252, 288, 324];

const GearLogo = () => (
  <svg width="40" height="40" viewBox="0 0 40 40" aria-hidden="true">
    <g fill="#4c4c4c">
      {TEETH.map(a => <path key={a} d="M16 1h7l1 6h-9z" transform={`rotate(${a} 19.500 20)`} />)}
    </g>
    <circle cx="19.500" cy="20" r="12.500" fill="none" stroke="#4c4c4c" strokeWidth="4" />
    <path d="M8 31 25 14q-2-6 3-10l4-1-3 5 3 3 5-3q1 8-9 9L12 35z" fill="#eeeeee" stroke="#555555" strokeWidth="1.500" />
    <circle cx="11" cy="32" r="3" fill="#ffffff" stroke="#7777aa" />
  </svg>
);

/* ---------- data ---------- */

const QUICK_A = [['newFile', 16], ['open', 14], ['save', 18], ['clean', 15], ['undo', 19]];
const QUICK_B = [['redoDim', 18], ['cutDim', 14], ['pageDim', 14], ['pageDim', 14], ['cutDim', 18], ['windowW', 17]];
const QUICK_C = [['mic', 22], ['swap', 15], ['cascade', 18], ['frame', 13]];

const TABS = ['主页', '装配', '曲线', '曲面', '分析', '视图', '渲染', '工具', '应用模块', '选择', '星空 V7.4', '模圣软件', '布线器', '优品软件', '优品软件', '优品软件', '明威科技'];

const LEFT_TOOLS = ['partEdit', 'moveObj', 'copyBody', 'cylCut', 'line', 'arc', 'circle', 'tangent', 'segment', 'plus', 'scurve', 'corner', 'scurveOr', 'trimCurve', 'offsetCirc', 'offsetBox', 'ring', 'sheetOr', 'sheetTl', 'sheetDk', 'sheetPk', 'sheetBl', 'cylArr', 'plus', 'crossX'];
const LEFT_PAIRS = ['arch', 'sheetB2', 'cylClip', 'twist'];
const RIGHT_TOOLS = ['thread', 'cube', 'cyl', 'cone', 'sphere', 'tube', 'edgeOr', 'chamOr', 'shell', 'cubeTool', 'wedge', 'cubePair', 'orTri', 'orTri', 'cylPk', 'saveGray', 'eyeBox', 'eyeSwap', 'sync'];
const BOTTOM_TOOLS = ['ruler', 'dimA', 'dimB', 'orShape', 'info', 'axesCube', 'axesMove', 'axesSimple', 'axesTri', 'axesSave', 'axesTag', 'stackPage', 'stackCheck', 'stackGear', 'globeOr', 'boxOr', 'square', 'orPage', 'orStack', 'slabA', 'slabB', 'slabC', 'wing', 'orMove', 'cubeAxis', 'chain', 'orPage', 'mirrorSh', 'archSh', 'mirror', 'linkBl', 'orDots', 'orCubeArr'];
const MINI_TOOLS = ['cubeTool', 'flat', 'shOr', 'shTan', 'shBlue', 'shTan', 'orPage', 'orStack', 'shTan', 'shPurple', 'shGray', 'curveBl', 'sheetB2', 'shTan', 'shGray', 'shBlue', 'linkBl', 'orStack', 'ballOr', 'barOr', 'kg', 'boxArrow'];

const VIEW_TOOLS = ['loupeWin', 'fit', 'bracket', 'cubeShade', 'eyeList', 'layers', 'blankWin'];

const RESOURCES = [['gear', 16], ['assembly', 46], ['constraint', 15], ['bracket', 27], ['bell', 25], ['bracketDots', 26], ['reuse', 27], ['infoG', 38], ['web', 30], ['clock', 34], ['roles', 19], ['process', 33], ['toolsBox', 21]];

const BODIES = [1, ...Array.from({ length: 32 }, (_, i) => i + 8).filter(n => n !== 27)];

const ROOTS = [
  { label: '模型视图', icons: ['viewBox'], mark: '+' },
  { label: '摄像机', icons: ['check', 'camera'], mark: '+' },
  { label: '非时间戳记几何体', icons: ['folder'], mark: '+' },
  { label: '模型历史记录', icons: ['ball', 'history'], mark: '−', ok: true },
  { label: '基准坐标系 (0)', icons: ['eyeOff', 'csys'], leaf: true, ok: true, dim: true },
];
const ROWS = [
  ...ROOTS,
  ...BODIES.map(n => ({ label: `体 (${n})`, icons: ['eye', 'body'], leaf: true, ok: true, picked: n === 26 })),
];

const App = () => (
  <>
    <GlobalStyle />
    <Frame>
      <Header>
        <TitleBar>
          <QuickBar>
            <Logo>NX</Logo>
            {QUICK_A.map(([n, w]) => <Tool1 key={n} name={n} w={w} size={11} />)}
            <Caret $w={6} $light />
            {QUICK_B.map(([n, w], i) => <Tool1 key={i} name={n} w={w} size={11} />)}
            <Caret $w={7} $light />
            {QUICK_C.map(([n, w]) => <Tool1 key={n} name={n} w={w} size={11} />)}
            <span>窗口</span>
            <Caret $w={8} $light />
            <Caret $w={8} $light />
          </QuickBar>
          <WindowTitle>NX - 建模</WindowTitle>
          <WindowControls>
            <Brand>SIEMENS</Brand>
            <Tool1 name="min" w={15} size={8} />
            <Tool1 name="max" w={14} size={9} />
            <Tool1 name="close" w={14} size={8} />
          </WindowControls>
        </TitleBar>
        <MenuBar>
          <MenuTab type="button">文件(F)</MenuTab>
          <MenuTabs>
            {TABS.map((t, i) => <MenuTab type="button" key={i} $active={i === 0}>{t}</MenuTab>)}
          </MenuTabs>
          <SearchBox>
            <SearchInput placeholder="查找命令" aria-label="查找命令" />
            <Glyph name="loupe" size={11} />
          </SearchBox>
          <Tool1 name="full" size={10} />
          <Tool1 name="up" size={10} />
          <Tool1 name="help" size={10} />
          <Tool1 name="alert" size={9} />
        </MenuBar>
      </Header>

      <Ribbon>
        <Group $w={39}>
          <GroupBody>
            <SmallColumn $w={39}>
              <SmallTool type="button" aria-label="plane" $tall $inset={7}><Glyph name="plane" size={16} /><Caret $w={8} /></SmallTool>
              <SmallTool type="button" aria-label="sketch" $tall $inset={7}><Glyph name="sketch" size={16} /></SmallTool>
            </SmallColumn>
          </GroupBody>
          <GroupLabel><span>构造</span><Caret $w={14} /></GroupLabel>
        </Group>
        <Group $w={180} $pad={4}>
          <GroupBody>
            <Big icon="extrude" label="拉伸" />
            <Big icon="revolve" label="旋转" />
            <Big icon="hole" label="孔" />
            <SmallColumn $w={3} />
            <Smalls w={32} items={[['unite', '合并'], ['subtract', '减去'], ['intersect', '求交']]} />
            <Smalls w={39} items={[['sweep', '扫掠'], ['sew', '缝合'], ['blend', '面倒圆']]} />
            <Big icon="moreCyl" label="更多" more />
          </GroupBody>
          <GroupLabel><span>基本</span><Caret $w={14} /></GroupLabel>
        </Group>
        <Group $w={117} $pad={6}>
          <GroupBody>
            <Smalls w={44} tall items={[['optFace', '优化面'], ['copyFace', '复制面']]} />
            <Smalls w={39} items={[['moveFace', '移动'], ['mirrorFace', '镜像面'], ['patternFace', '阵列面']]} />
            <Big icon="refresh" label="更多" more />
          </GroupBody>
          <GroupLabel><span>同步建模</span><Caret $w={14} /></GroupLabel>
        </Group>
        <Group $w={145} $pad={2}>
          <GroupBody>
            <Big icon="patch" label="修补" low />
            <Big icon="trim" label="剪断" low />
            <SmallColumn $w={3} />
            <Smalls w={45} items={[['facePair', '面对'], ['xform', 'X 型'], ['normal', '法向反向']]} />
            <Smalls w={42} items={[['editSec', '编辑截面'], ['cutSec', '剪切截面'], ['drawShape', '绘制形状']]} />
          </GroupBody>
        </Group>
        <Group $w={27}>
          <GroupBody><Big icon="surface" label="更多" w={27} more /></GroupBody>
        </Group>
        <Group $w={27}>
          <GroupBody><Big icon="toolbox" label="工具箱" w={27} more /></GroupBody>
        </Group>
        <Group $w={328} $pad={3}>
          <GroupBody>
            <Big icon="brush" label="编辑对象显示" w={46} low />
            <Big icon="colors" label="指派特征颜色" w={46} low />
            <Big icon="letter" label="文本" w={24} low />
            <SmallColumn $w={3} />
            <Smalls w={45} items={[['engrave', '刻字'], ['nest', '毛坯套裁'], ['die', '冲模工程']]} />
            <Smalls w={86} items={[['compare', '模型比较（即将失效）'], ['compare', '比较体'], ['density', '编辑实体密度']]} />
            <Smalls w={70} items={[['wave', 'WAVE 几何链接器'], ['equals', '表达式'], ['spline', '样条（即将失效）']]} />
          </GroupBody>
        </Group>
        <Spacer />
        <Group as="div" $w={12} $last>
          <span />
          <GroupLabel><Caret $w={10} /></GroupLabel>
        </Group>
      </Ribbon>

      <SelectionBar>
        <MenuButton type="button">
          <Glyph name="menu" size={10} />
          <span>菜单(<u>M</u>)</span>
          <Caret $w={6} />
        </MenuButton>
        <Choice w={93} label="选择过滤器" options={['无选择过滤器']} />
        <Tool1 name="funnel" w={25} size={15} />
        <Choice w={97} label="选择范围" options={['整个装配']} />
        <Tool1 name="faceCube" w={17} h={19} size={14} on />
        <Tool1 name="link" w={24} size={14} />
        <Tool1 name="funnelList" w={17} size={15} />
        <Caret $w={8} />
        <Tool1 name="boxDim" w={18} size={14} />
        <Tool1 name="boxSel" w={23} size={15} />
        <Tool1 name="rectSel" w={19} size={15} />
        <Caret $w={10} />
        <Tool1 name="cubeIn" w={21} size={15} />
        <Tool1 name="cubeWire" w={20} size={15} />
        <Divider />
        <Choice w={30} label="层" options={['2']} />
        <Tool1 name="winList" w={23} size={15} />
        <Tool1 name="frames" w={20} size={15} />
        <Tool1 name="axes" w={20} size={15} />
        <BarText>简化装配（原有）</BarText>
        {VIEW_TOOLS.map(n => (
          <React.Fragment key={n}>
            <Tool1 name={n} w={20} size={16} />
            <Caret $w={9} />
          </React.Fragment>
        ))}
        <Divider />
        <Spacer />
        <Caret $w={10} />
      </SelectionBar>

      <WorkArea>
        <SideBar>
          <SideTools>
            {LEFT_TOOLS.map((n, i) => <Tool1 key={i} name={n} size={15} />)}
          </SideTools>
          <PairGrid>
            {LEFT_PAIRS.map(n => <Tool1 key={n} name={n} w={14} h={14} size={11} />)}
          </PairGrid>
          <SideEnd $h={26}><Caret $w={8} /></SideEnd>
        </SideBar>

        <Stage>
          <FileTab>
            <Glyph name="bracket" size={9} />
            <span>42-1.prt</span>
            <Glyph name="display" size={7} />
            <Tool1 name="close" w={8} h={10} size={6} />
          </FileTab>
          <ViewFrame><PlateScene /></ViewFrame>
        </Stage>

        <SideBar>
          <SideTools>
            {RIGHT_TOOLS.map((n, i) => <Tool1 key={i} name={n} size={15} />)}
          </SideTools>
          <SideEnd $h={176} $line><Caret $w={8} /></SideEnd>
        </SideBar>

        <Navigator>
          <NavTitle><Glyph name="win" size={8} />部件导航器</NavTitle>
          <TreeArea>
            <TreeTable>
              <colgroup>
                <col />
                <col width="15" />
                <col width="15" />
                <col width="62" />
                <col width="18" />
              </colgroup>
              <thead>
                <tr><th>名称<SortMark /></th><th>当</th><th>最</th><th>附注</th><th /></tr>
              </thead>
              <tbody>
                {ROWS.map((r, i) => (
                  <TreeRow key={r.label} $odd={i % 2 === 1} $picked={r.picked} $dim={r.dim}>
                    <td>
                      <NameCell $leaf={r.leaf}>
                        {r.mark && <Expander type="button">{r.mark}</Expander>}
                        {r.icons.map(n => <Glyph key={n} name={n} size={10} />)}
                        <span>{r.label}</span>
                      </NameCell>
                    </td>
                    <td />
                    <td>{r.ok && <CheckMark><Glyph name="check" size={9} /></CheckMark>}</td>
                    <td />
                    <td />
                  </TreeRow>
                ))}
              </tbody>
            </TreeTable>
            <ScrollTrack />
          </TreeArea>
          {['搜索', '相关性', '细节', '预览'].map(s => <Section type="button" key={s}>{s}</Section>)}
        </Navigator>

        <ResourceBar>
          {RESOURCES.map(([n, h]) => (
            <ResourceTab type="button" key={n} aria-label={n} $h={h} $small={n === 'gear'} $active={n === 'bracket'}>
              <Glyph name={n} size={n === 'gear' ? 9 : 15} />
            </ResourceTab>
          ))}
        </ResourceBar>
      </WorkArea>

      <BottomBar>
        <BottomTools>
          {BOTTOM_TOOLS.map((n, i) => <Tool1 key={i} name={n} size={15} />)}
        </BottomTools>
        <MiniGrid>
          {MINI_TOOLS.map((n, i) => <Tool1 key={i} name={n} w={12} h={12} size={10} />)}
        </MiniGrid>
        <Caret $w={6} />
        <Watermark>
          <GearLogo />
          <WatermarkText>机械资源网<small>www.u557.com</small></WatermarkText>
        </Watermark>
      </BottomBar>

      <StatusBar>
        <span>选择对象并使用 MB3，或者双击某一对象</span>
        <span>体(26)</span>
      </StatusBar>
    </Frame>
  </>
);

export default App;
